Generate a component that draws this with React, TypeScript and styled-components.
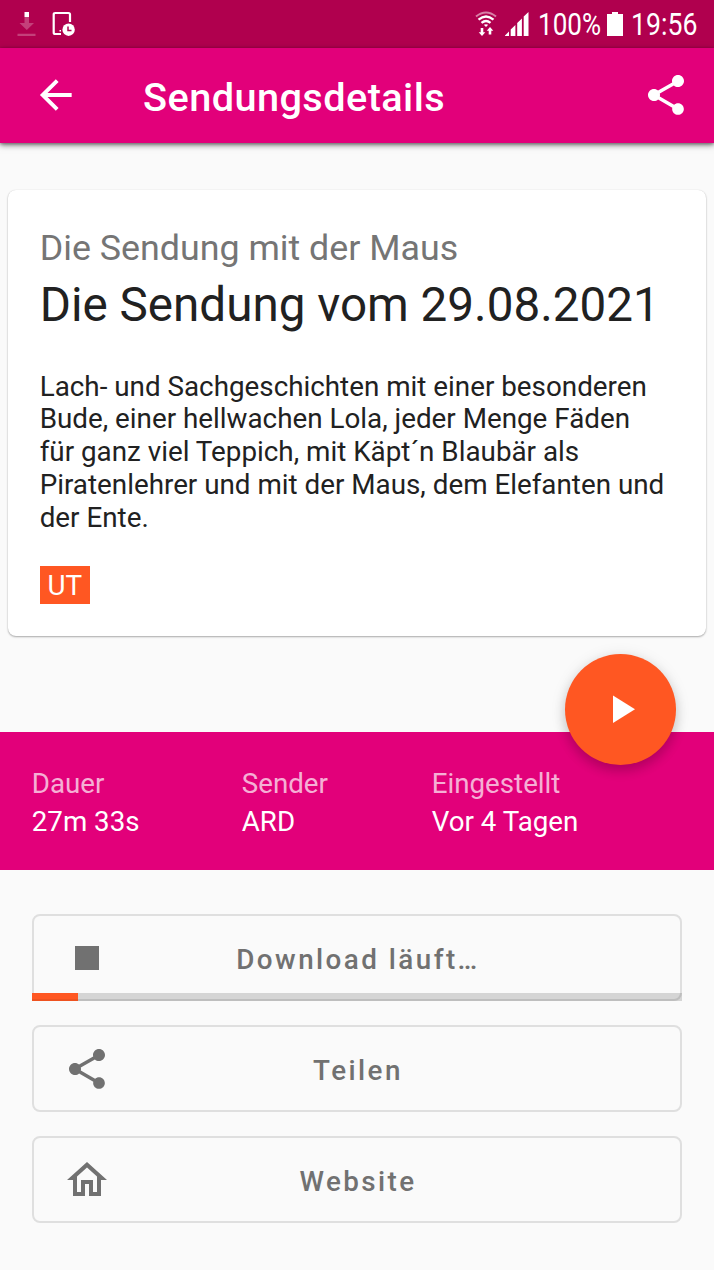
import React from 'react';
import styled, { createGlobalStyle } from 'styled-components';

const GlobalStyle = createGlobalStyle`
  * { box-sizing: border-box; }
  body { margin: 0; background: #fafafa; font-family: Roboto, 'Liberation Sans', sans-serif; }
  svg { display: block; flex: none; }
  h1, h2, p, dl, dt, dd { margin: 0; font-weight: 400; }
  button { font: inherit; border: 0; background: none; padding: 0; }
`;

const Screen = styled.div`
  width: 714px;
  height: 1270px;
  overflow: hidden;
  background: #fafafa;
`;

const StatusBar = styled.div`
  height: 47.5px;
  background: #b0004e;
  color: #fff;
  display: flex;
  align-items: center;
  padding: 0 17px 0 17px;
`;

const StatusText = styled.span<{ $width: number; $scale: number }>`
  width: ${(p) => p.$width}px;
  font-size: 31px;
  line-height: 36px;
  white-space: nowrap;
  transform: scaleX(${(p) => p.$scale});
  transform-origin: left;
  padding-top: 3px;
`;

const Spacer = styled.div`
  flex: 1;
`;

const AppBar = styled.header`
  position: relative;
  height: 95.5px;
  background: #e2007a;
  color: #fff;
  display: flex;
  align-items: center;
  padding: 0 24px 0 32px;
  box-shadow: 0 2px 6px rgba(0, 0, 0, 0.5), 0 1px 3px rgba(0, 0, 0, 0.3);
`;

const IconButton = styled.button`
  color: inherit;
  width: 48px;
  height: 48px;
`;

const BarTitle = styled.h1`
  flex: 1;
  padding: 5px 0 0 63px;
  font-size: 39.7px;
  font-weight: 500;
  line-height: 48px;
  letter-spacing: 0.42px;
`;

const Card = styled.section`
  margin: 47px 8px 0;
  height: 446px;
  padding: 36px 31.7px;
  border-radius: 8px;
  background: #fff;
  box-shadow: 0 1px 2px rgba(0, 0, 0, 0.32), 0 0 1px rgba(0, 0, 0, 0.12);
`;

const Show = styled.p`
  font-size: 35.8px;
  line-height: 44px;
  color: #757575;
`;

const Episode = styled.h2`
  font-size: 47.6px;
  line-height: 56px;
  margin-top: 7px;
  color: #212121;
  white-space: nowrap;
`;

const Description = styled.p`
  margin-top: 37.7px;
  font-size: 27.8px;
  line-height: 32.75px;
  color: #212121;
  white-space: nowrap;
`;

const Badge = styled.span`
  display: block;
  width: 50px;
  height: 37.5px;
  margin-top: 32px;
  background: #ff5722;
  color: #fff;
  font-size: 27.8px;
  line-height: 40px;
  text-align: center;
`;

const InfoBand = styled.dl`
  position: relative;
  margin-top: 95.5px;
  height: 138.5px;
  padding: 33px 31.8px 0;
  display: flex;
  background: #e2007a;
  color: #fff;
  font-size: 27.7px;
  line-height: 38px;
`;

const InfoItem = styled.div<{ $width: number }>`
  width: ${(p) => p.$width}px;
  white-space: nowrap;
`;

const InfoLabel = styled.dt`
  color: rgba(255, 255, 255, 0.7);
`;

const PlayButton = styled.button`
  position: absolute;
  top: -78px;
  right: 38px;
  width: 111px;
  height: 111px;
  border-radius: 50%;
  background: #ff5722;
  color: #fff;
  display: flex;
  align-items: center;
  justify-content: center;
  box-shadow: 0 6px 12px rgba(0, 0, 0, 0.16), 0 2px 16px rgba(0, 0, 0, 0.1);
`;

const Actions = styled.div`
  display: flex;
  flex-direction: column;
  gap: 24px;
  padding: 44.2px 32px 0;
`;

const ActionButton = styled.button`
  position: relative;
  height: 87px;
  border: 2px solid #dfdfdf;
  border-radius: 8px;
  display: flex;
  align-items: center;
  padding: 0 29.3px;
  color: #717171;
`;

const ActionLabel = styled.span`
  flex: 1;
  padding: 4px 46px 0 0;
  text-align: center;
  font-size: 27.8px;
  font-weight: 500;
  letter-spacing: 2.45px;
`;

const Progress = styled.span`
  position: absolute;
  left: -2px;
  right: -2px;
  bottom: -2px;
  height: 8px;
  background: rgba(0, 0, 0, 0.145);
`;

const ProgressValue = styled.span`
  display: block;
  height: 100%;
  background: #ff5722;
  border-bottom: 2px solid #ee5220;
`;

const ShareIcon = ({ size = 48 }: { size?: number }) => (
  <svg width={size} height={size} viewBox="0 0 24 24" fill="currentColor">
    <path d="M18 16.08c-.76 0-1.44.3-1.96.77L8.91 12.7c.05-.23.09-.46.09-.7s-.04-.47-.09-.7l7.05-4.11c.54.5 1.25.81 2.04.81 1.66 0 3-1.34 3-3s-1.34-3-3-3-3 1.34-3 3c0 .24.04.47.09.7L8.04 9.81C7.5 9.31 6.79 9 6 9c-1.66 0-3 1.34-3 3s1.34 3 3 3c.79 0 1.5-.31 2.04-.81l7.12 4.16c-.05.21-.08.43-.08.65 0 1.61 1.31 2.92 2.92 2.92 1.61 0 2.92-1.31 2.92-2.92s-1.31-2.92-2.92-2.92z" />
  </svg>
);

const DownloadGlyph = () => (
  <svg width="19" height="48" viewBox="0 0 19 48">
    <path d="M7.500 17h4.500v6h5l-7.200 7L2.500 23h5zM0.500 33.700h18v2.300h-18z" fill="#fff" fillOpacity=".25" />
    <path d="M7.500 12h4.500v5h-4.500z" fill="#fff" />
  </svg>
);

const DeviceClockGlyph = () => (
  <svg width="24" height="48" viewBox="0 0 24 48" fill="none" stroke="#fff">
    <path d="M19 22v-7.500q0-1.500-1.500-1.500H4.200Q2.700 13 2.700 14.500v18q0 1.500 1.500 1.500H10" strokeWidth="2.200" />
    <path d="M8.500 30h1.500v1.500H8.500z" fill="#fff" stroke="none" />
    <circle cx="17.600" cy="29.700" r="6.200" fill="#fff" stroke="none" />
    <path d="M17 26.500v4h3.500" stroke="#b0004e" strokeWidth="1.500" />
  </svg>
);

const WifiGlyph = () => (
  <svg width="22" height="48" viewBox="0 0 22 48" fill="none" stroke="#fff" strokeWidth="2">
    <path d="M1 16.500Q11 8.500 21 16.500" strokeOpacity=".5" />
    <path d="M3.500 19.700Q11 13.300 18.500 19.700M6.500 22.800q4.500-3.700 9 0" strokeWidth="2.300" />
    <path d="M8.800 24.700q2.200-1 4.400 0L11 27z" fill="#fff" stroke="none" />
    <path d="M5.700 28h2.600v4.200h2L7 36l-3.300-3.800h2zM13.700 34.500h2.600v-3.700h2L15 27l-3.300 3.800h2z" fill="#fff" stroke="none" />
  </svg>
);

const SignalGlyph = () => (
  <svg width="25" height="48" viewBox="0 0 25 48" fill="#fff">
    <path d="M-0.500 36l4.500-4.500V36zM5.700 29.500l4.700-4.500V36h-4.700zM12.200 23l4.700-4.500V36h-4.700zM18.700 16.500l4.800-4.500v24h-4.800z" />
  </svg>
);

const BatteryGlyph = () => (
  <svg width="16" height="48" viewBox="0 0 16 48" fill="#fff">
    <path d="M5 12h6v2h5v22H0V14h5z" />
  </svg>
);

const StatusGroup = styled.div<{ $gap: number }>`
  display: flex;
  align-items: center;
  gap: ${(p) => p.$gap}px;
`;

const info = [
  { label: 'Dauer', value: '27m 33s', width: 210 },
  { label: 'Sender', value: 'ARD', width: 190 },
  { label: 'Eingestellt', value: 'Vor 4 Tagen', width: 160 },
];

const downloadPercent = 7;

export default function App() {
  return (
    <Screen>
      <GlobalStyle />
      <StatusBar>
        <StatusGroup $gap={15}>
          <DownloadGlyph />
          <DeviceClockGlyph />
        </StatusGroup>
        <Spacer />
        <StatusGroup $gap={8}>
          <WifiGlyph />
          <SignalGlyph />
          <StatusText $width={61} $scale={0.84}>100%</StatusText>
          <BatteryGlyph />
          <StatusText $width={66} $scale={0.86}>19:56</StatusText>
        </StatusGroup>
      </StatusBar>
      <AppBar>
        <IconButton aria-label="Zurück">
          <svg width="47.600" height="48" viewBox="0 0 24 24" fill="currentColor">
            <path d="M20 11H7.830l5.590-5.590L12 4l-8 8 8 8 1.410-1.410L7.830 13H20v-2z" />
          </svg>
        </IconButton>
        <BarTitle>Sendungsdetails</BarTitle>
        <IconButton aria-label="Teilen">
          <ShareIcon />
        </IconButton>
      </AppBar>
      <Card>
        <Show>Die Sendung mit der Maus</Show>
        <Episode>Die Sendung vom 29.08.2021</Episode>
        <Description>
          Lach- und Sachgeschichten mit einer besonderen<br />
          Bude, einer hellwachen Lola, jeder Menge Fäden<br />
          für ganz viel Teppich, mit Käpt´n Blaubär als<br />
          Piratenlehrer und mit der Maus, dem Elefanten und<br />
          der Ente.
        </Description>
        <Badge>UT</Badge>
      </Card>
      <InfoBand>
        {info.map((item) => (
          <InfoItem key={item.label} $width={item.width}>
            <InfoLabel>{item.label}</InfoLabel>
            <dd>{item.value}</dd>
          </InfoItem>
        ))}
        <PlayButton aria-label="Abspielen">
          <svg width="48" height="48" viewBox="0 0 24 24" fill="currentColor">
            <path d="M8 5.200v13.800l11-6.900z" />
          </svg>
        </PlayButton>
      </InfoBand>
      <Actions>
        <ActionButton>
          <svg width="48" height="48" viewBox="0 0 24 24" fill="currentColor">
            <path d="M6 6h12v12H6z" />
          </svg>
          <ActionLabel>Download läuft…</ActionLabel>
          <Progress>
            <ProgressValue style={{ width: `${downloadPercent}%` }} />
          </Progress>
        </ActionButton>
        <ActionButton>
          <ShareIcon />
          <ActionLabel>Teilen</ActionLabel>
        </ActionButton>
        <ActionButton>
          <svg width="48" height="48" viewBox="0 0 24 24" fill="currentColor">
            <path d="M12 5.690l5 4.500V18h-2v-6H9v6H7v-7.810l5-4.500M12 3L2 12h3v8h6v-6h2v6h6v-8h3L12 3z" />
          </svg>
          <ActionLabel>Website</ActionLabel>
        </ActionButton>
      </Actions>
    </Screen>
  );
}
